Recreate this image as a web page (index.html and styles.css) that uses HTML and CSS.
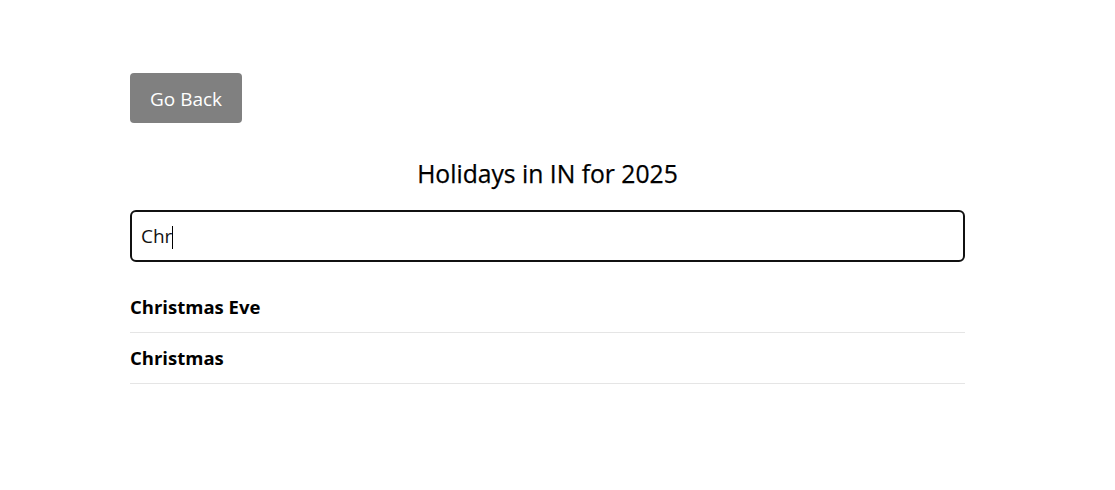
FILE: index.html
```html
<!DOCTYPE html>
<html>
<head>
<meta charset="utf-8">
<link rel="stylesheet" href="styles.css">
</head>
<body>
<main class="page">
  <div class="top">
    <button class="back-btn">Go Back</button>
  </div>
  <h2 class="title">Holidays in IN for 2025</h2>
  <div class="search-wrap">
    <input class="search" type="text" value="Chr">
    <span class="caret"></span>
  </div>
  <ul class="list">
    <li class="item">Christmas Eve</li>
    <li class="item">Christmas</li>
  </ul>
</main>
</body>
</html>
```
FILE: styles.css
```css
html, body {
  margin: 0;
  padding: 0;
  background: #fff;
}
body {
  font-family: "Open Sans", "Noto Sans", sans-serif;
  color: #000;
}
.page {
  width: 835px;
  margin-left: 130px;
  padding-top: 73px;
  display: flex;
  flex-direction: column;
}
.top {
  display: flex;
}
.back-btn {
  height: 50px;
  padding: 0 20px;
  background: #808080;
  color: #fff;
  border: none;
  border-radius: 4px;
  font-family: inherit;
  font-size: 19px;
  padding-top: 2px;
}
.title {
  margin: 36px 0 0;
  height: 30px;
  line-height: 30px;
  text-align: center;
  font-size: 24.7px;
  font-weight: 400;
  -webkit-text-stroke: 0.25px #000;
}
.search-wrap {
  position: relative;
  margin-top: 21px;
  display: flex;
  flex-direction: column;
}
.search {
  height: 52px;
  box-sizing: border-box;
  border: 2px solid #111;
  border-radius: 6px;
  padding: 0 9px;
  font-family: inherit;
  font-size: 19px;
  outline: none;
  color: #111;
}
.caret {
  position: absolute;
  left: 42px;
  top: 16px;
  width: 1px;
  height: 23px;
  background: #000;
}
.list {
  list-style: none;
  margin: 20px 0 0;
  padding: 0;
}
.item {
  height: 50px;
  line-height: 50px;
  border-bottom: 1px solid #e5e5e5;
  font-size: 18.5px;
  font-weight: 700;
}
```
